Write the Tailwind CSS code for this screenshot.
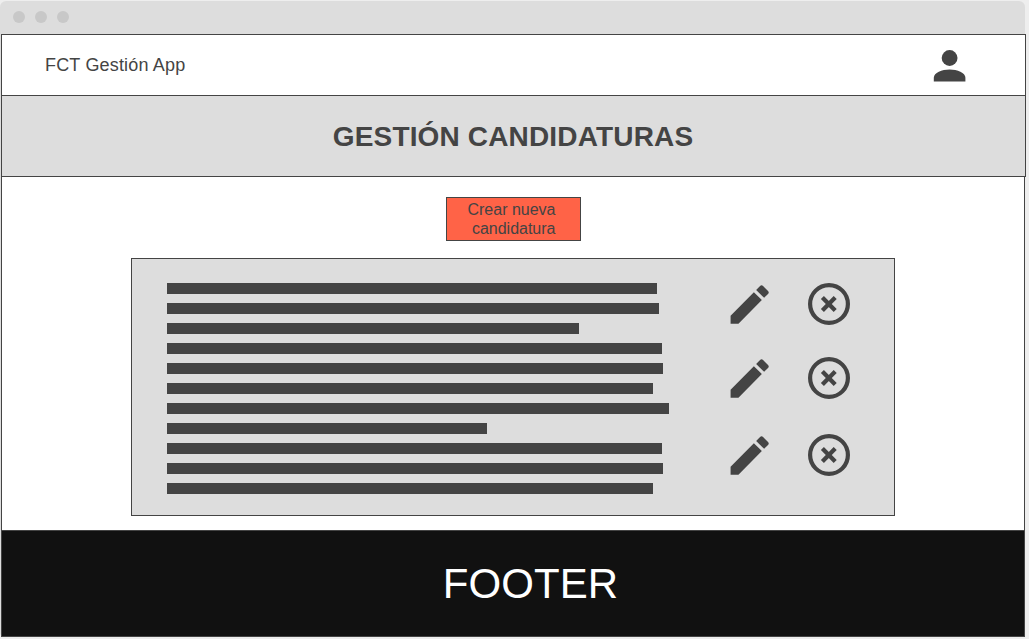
<!DOCTYPE html>
<html lang="es">
<head>
<meta charset="utf-8">
<title>FCT Gestión App</title>
<script src="https://cdn.jsdelivr.net/npm/@tailwindcss/browser@4"></script>
</head>
<body class="h-[639px] w-[1029px] overflow-hidden bg-[#eee] pt-px font-['Liberation_Sans',Arial,sans-serif] text-[#444]">
<svg class="hidden">
  <symbol id="edit" viewBox="0 0 24 24"><path fill="currentColor" d="M3.1 17.25V21h3.7L17.81 9.94l-3.75-3.75L3.1 17.25zM20.71 7.04a1 1 0 0 0 0-1.41l-2.34-2.34a1 1 0 0 0-1.41 0l-1.83 1.83 3.75 3.75 1.83-1.83z"/></symbol>
  <symbol id="remove" viewBox="0 0 42 42"><circle cx="21" cy="21" r="18.9" fill="none" stroke="currentColor" stroke-width="4.2"/><path fill="none" stroke="currentColor" stroke-width="4.3" d="M14.4 14.6l12.8 12.8M27.2 14.6L14.4 27.4"/></symbol>
</svg>
<div class="h-[635px] w-[1025px] rounded-t-[6px] rounded-b-[3px] bg-[#ddd]">
  <div class="flex h-[33px] items-center gap-2.5 pb-px pl-[13px]">
    <span class="size-3 rounded-full bg-[#c8c8c8]"></span>
    <span class="size-3 rounded-full bg-[#c8c8c8]"></span>
    <span class="size-3 rounded-full bg-[#c8c8c8]"></span>
  </div>
  <header class="ml-px flex h-[61px] w-[1025px] items-start justify-between border border-b-0 border-[#444] bg-white pr-[51px] pl-[43px]">
    <span class="pt-[20px] text-[18px] leading-[20px] tracking-[0.18px]">FCT Gestión App</span>
    <svg class="mt-[6.5px] size-12" viewBox="0 0 48 48" fill="currentColor"><circle cx="23.6" cy="16" r="7.9"/><path d="M7.8 39.5V35.8C7.8 30.6 15.9 27.5 23.6 27.5S39.4 30.6 39.4 35.8V39.5z"/></svg>
  </header>
  <div class="ml-px flex h-[82px] w-[1025px] items-center justify-center border border-[#444] bg-[#ddd] pt-[2px] pr-px">
    <h1 class="text-[28px] leading-[32px] font-bold tracking-[0.16px]">GESTIÓN CANDIDATURAS</h1>
  </div>
  <main class="ml-px flex h-[353px] w-[1024px] flex-col items-center border-x border-[#444] bg-white pt-[20px]">
    <button class="h-[44px] w-[135px] border border-[#444] bg-[#ff6347] pr-[24px] text-right text-[16px] leading-[19px]">Crear nueva<br>candidatura</button>
    <section class="mt-[17px] flex h-[258px] w-[764px] border border-[#444] bg-[#ddd] pt-[24px] pl-[35px]">
      <div class="flex w-[559px] flex-col gap-[9px]">
        <div class="h-[11px] w-[490px] bg-[#444]"></div>
        <div class="h-[11px] w-[492px] bg-[#444]"></div>
        <div class="h-[11px] w-[412px] bg-[#444]"></div>
        <div class="h-[11px] w-[495px] bg-[#444]"></div>
        <div class="h-[11px] w-[496px] bg-[#444]"></div>
        <div class="h-[11px] w-[486px] bg-[#444]"></div>
        <div class="h-[11px] w-[502px] bg-[#444]"></div>
        <div class="h-[11px] w-[320px] bg-[#444]"></div>
        <div class="h-[11px] w-[495px] bg-[#444]"></div>
        <div class="h-[11px] w-[496px] bg-[#444]"></div>
        <div class="h-[11px] w-[486px] bg-[#444]"></div>
      </div>
      <div class="flex flex-col">
        <div class="flex h-[74px] gap-[33px]"><svg class="-mt-[4px] -ml-[2px] size-[51px]"><use href="#edit"/></svg><svg class="size-[42px]"><use href="#remove"/></svg></div>
        <div class="flex h-[77px] gap-[33px]"><svg class="-mt-[4px] -ml-[2px] size-[51px]"><use href="#edit"/></svg><svg class="size-[42px]"><use href="#remove"/></svg></div>
        <div class="flex gap-[33px]"><svg class="-mt-[4px] -ml-[2px] size-[51px]"><use href="#edit"/></svg><svg class="size-[42px]"><use href="#remove"/></svg></div>
      </div>
    </section>
  </main>
  <footer class="ml-px flex h-[107px] w-[1024px] items-center justify-center border border-[#444] bg-[#111] pl-[35px] text-white">
    <span class="text-[42px] leading-[48px] tracking-[0.05px]">FOOTER</span>
  </footer>
</div>
</body>
</html>
